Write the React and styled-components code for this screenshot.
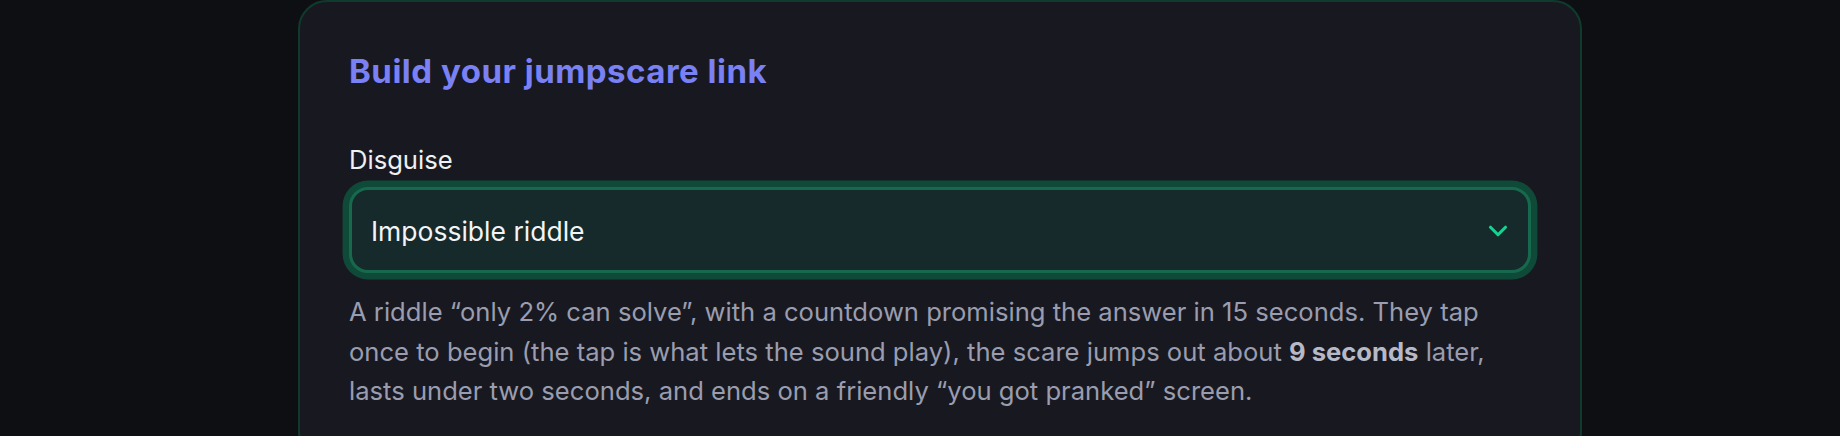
import { useState } from "react";
import styled, { createGlobalStyle } from "styled-components";
import { ChevronDown } from "lucide-react";

const GlobalStyle = createGlobalStyle`
  html, body {
    margin: 0;
    padding: 0;
    background: #0e0f13;
  }
  body {
    font-family: Inter, "Noto Sans", sans-serif;
    -webkit-font-smoothing: antialiased;
  }
`;

const Page = styled.div`
  display: flex;
  justify-content: center;
  padding: 0 258px 0 298px;
  min-height: 436px;
  box-sizing: border-box;
`;

const Card = styled.section`
  width: 100%;
  box-sizing: border-box;
  background: #181920;
  border: 2px solid #0f3b2c;
  border-radius: 29px;
  padding: 49.5px 49px 48px;
`;

const Title = styled.h2`
  margin: 0;
  font-size: 33px;
  line-height: 1.2;
  font-weight: 700;
  letter-spacing: 0.5px;
  color: #7a81f5;
`;

const Field = styled.div`
  display: flex;
  flex-direction: column;
  margin-top: 50px;
`;

const Label = styled.label`
  font-size: 25.6px;
  line-height: 1.5;
  color: #eef0f5;
  margin-bottom: 7.5px;
`;

const SelectBox = styled.button`
  display: flex;
  align-items: center;
  justify-content: space-between;
  box-sizing: border-box;
  width: 100%;
  height: 86.4px;
  padding: 2px 15px 0 19px;
  background: #172a2b;
  border: 3px solid #17694e;
  border-radius: 19px;
  box-shadow: 0 0 0 6.4px #0f4a39;
  font-family: inherit;
  font-size: 26.5px;
  color: #f2f4f7;
  text-align: left;
  cursor: pointer;
  outline: none;

  svg {
    color: #14d38f;
    flex-shrink: 0;
  }
`;

const Description = styled.p`
  margin: 19px 0 0;
  font-size: 25.6px;
  line-height: 39.5px;
  color: #9a9daf;

  strong {
    font-weight: 700;
    color: #b6b9c7;
  }
`;

const App = () => {
  const [disguise] = useState("Impossible riddle");

  return (
    <>
      <GlobalStyle />
      <Page>
        <Card>
          <Title>Build your jumpscare link</Title>
          <Field>
            <Label>Disguise</Label>
            <SelectBox type="button">
              <span>{disguise}</span>
              <ChevronDown size={30} strokeWidth={2.5} />
            </SelectBox>
          </Field>
          <Description>
            A riddle “only 2% can solve”, with a countdown promising the answer
            in 15 seconds. They tap once to begin (the tap is what lets the
            sound play), the scare jumps out about <strong>9 seconds</strong>{" "}
            later, lasts under two seconds, and ends on a friendly “you got
            pranked” screen.
          </Description>
        </Card>
      </Page>
    </>
  );
};

export default App;
